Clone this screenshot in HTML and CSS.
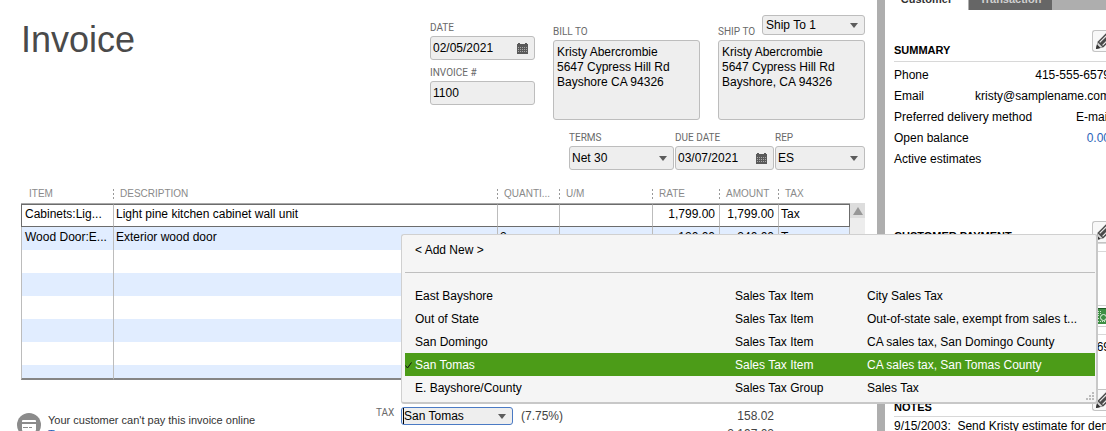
FILE: index.html
```html
<!DOCTYPE html>
<html lang="en">
<head>
<meta charset="utf-8">
<title>Invoice</title>
<link rel="stylesheet" href="styles.css">
</head>
<body>
<svg class="defs" aria-hidden="true">
  <symbol id="arrow" viewBox="0 0 8 5"><path d="M0 0h8L4 5z" fill="#5c5c5c"/></symbol>
  <symbol id="calendar" viewBox="0 0 11 11"><path d="M0 1h1V0h2v1h5V0h2v1h1v10H0z" fill="#5a5a5a"/><path d="M1 4.5h9M1 6.5h9M1 8.5h9" stroke="#a8a8a8" stroke-dasharray="1 1"/></symbol>
  <symbol id="pencil" viewBox="0 0 18 18"><path d="M1 17l2-8L12 0l6 6-9 9z" fill="#4a4a4a"/><path d="M5 10l9-9M8 13l9-9" stroke="#e8e8e8" stroke-width="1.2"/><path d="M3 10l5 5-4 1-2-2z" fill="#d8d8d8"/><path d="M1 17l1-5 4 4z" fill="#333"/></symbol>
</svg>
<div class="app">
  <main class="main">
    <header class="header">
      <h1 class="title">Invoice</h1>
      <div class="dates">
        <div class="field">
          <label class="label" for="date">DATE</label>
          <span class="box"><input class="input" id="date" value="02/05/2021"><button class="icon-button" aria-label="Pick date"><svg class="calendar"><use href="#calendar"/></svg></button></span>
        </div>
        <div class="field">
          <label class="label" for="number">INVOICE #</label>
          <span class="box"><input class="input" id="number" value="1100"></span>
        </div>
      </div>
      <div class="address">
        <div class="address-head"><label class="label" for="bill">BILL TO</label></div>
        <textarea class="textarea" id="bill">Kristy Abercrombie
5647 Cypress Hill Rd
Bayshore CA 94326</textarea>
      </div>
      <div class="address">
        <div class="address-head"><label class="label" for="ship">SHIP TO</label>
          <span class="box box-ship"><select class="select" aria-label="Ship to address"><option>Ship To 1</option></select><svg class="arrow"><use href="#arrow"/></svg></span>
        </div>
        <textarea class="textarea" id="ship">Kristy Abercrombie
5647 Cypress Hill Rd
Bayshore, CA 94326</textarea>
      </div>
    </header>

    <div class="terms">
      <div class="field field-terms">
        <label class="label" for="terms">TERMS</label>
        <span class="box"><select class="select" id="terms"><option>Net 30</option></select><svg class="arrow"><use href="#arrow"/></svg></span>
      </div>
      <div class="field field-due">
        <label class="label" for="due">DUE DATE</label>
        <span class="box"><input class="input" id="due" value="03/07/2021"><button class="icon-button" aria-label="Pick due date"><svg class="calendar"><use href="#calendar"/></svg></button></span>
      </div>
      <div class="field field-rep">
        <label class="label" for="rep">REP</label>
        <span class="box"><select class="select" id="rep"><option>ES</option></select><svg class="arrow"><use href="#arrow"/></svg></span>
      </div>
    </div>

    <div class="lines">
      <table class="table">
        <colgroup><col class="c-item"><col><col class="c-qty"><col class="c-um"><col class="c-rate"><col class="c-amount"><col class="c-tax"></colgroup>
        <thead>
          <tr><th><div class="head">ITEM</div></th><th><div class="head">DESCRIPTION</div></th><th><div class="head">QUANTI...</div></th><th><div class="head">U/M</div></th><th><div class="head">RATE</div></th><th><div class="head">AMOUNT</div></th><th><div class="head">TAX</div></th></tr>
        </thead>
        <tbody>
          <tr class="current"><td>Cabinets:Lig...</td><td>Light pine kitchen cabinet wall unit</td><td></td><td></td><td class="num">1,799.00</td><td class="num">1,799.00</td><td>Tax</td></tr>
          <tr><td>Wood Door:E...</td><td>Exterior wood door</td><td>2</td><td></td><td class="num">120.00</td><td class="num">240.00</td><td>Tax</td></tr>
          <tr><td></td><td></td><td></td><td></td><td></td><td></td><td></td></tr>
          <tr><td></td><td></td><td></td><td></td><td></td><td></td><td></td></tr>
          <tr><td></td><td></td><td></td><td></td><td></td><td></td><td></td></tr>
          <tr><td></td><td></td><td></td><td></td><td></td><td></td><td></td></tr>
          <tr><td></td><td></td><td></td><td></td><td></td><td></td><td></td></tr>
          <tr class="partial"><td></td><td></td><td></td><td></td><td></td><td></td><td></td></tr>
        </tbody>
      </table>
      <div class="scrollbar"><button class="scroll-up" aria-label="Scroll up"><svg class="scroll-arrow" viewBox="0 0 10 8"><path d="M5 0l5 8H0z" fill="#979797"/></svg></button></div>
    </div>

    <footer class="footer">
      <div class="notice">
        <svg class="card" viewBox="0 0 24 24"><circle cx="12" cy="12" r="12" fill="#8b8b8b"/><rect x="5" y="7" width="14" height="11" rx="1" fill="#fff"/><path d="M5 10h14" stroke="#8b8b8b" stroke-width="2"/><path d="M6 14.500h5M12 14.500h3" stroke="#8b8b8b"/></svg>
        <div class="notice-text">Your customer can't pay this invoice online<a class="link" href="#">Turn on</a></div>
      </div>
      <div class="totals">
        <label class="label" for="tax">TAX</label>
        <div class="combo">
          <span class="box box-tax"><input class="input input-tax" id="tax" value="San Tomas"><button class="icon-button" aria-label="Open tax list"><svg class="arrow"><use href="#arrow"/></svg></button></span>
          <div class="popup" role="listbox" aria-label="Tax">
            <div class="option option-new" role="option"><span></span><span>&lt; Add New &gt;</span></div>
            <div class="option" role="option"><span></span><span>East Bayshore</span><span>Sales Tax Item</span><span>City Sales Tax</span></div>
            <div class="option" role="option"><span></span><span>Out of State</span><span>Sales Tax Item</span><span>Out-of-state sale, exempt from sales t...</span></div>
            <div class="option" role="option"><span></span><span>San Domingo</span><span>Sales Tax Item</span><span>CA sales tax, San Domingo County</span></div>
            <div class="option selected" role="option" aria-selected="true"><svg class="check" viewBox="0 0 7 7"><path d="M.5 3.500L2.500 6 6.500.5" fill="none" stroke="#111"/></svg><span>San Tomas</span><span>Sales Tax Item</span><span>CA sales tax, San Tomas County</span></div>
            <div class="option" role="option"><span></span><span>E. Bayshore/County</span><span>Sales Tax Group</span><span>Sales Tax</span></div>
            <svg class="grip" viewBox="0 0 8 8"><path d="M6 0h2v2H6zM3 3h2v2H3zM6 3h2v2H6zM0 6h2v2H0zM3 6h2v2H3zM6 6h2v2H6z" fill="#bcbcbc"/></svg>
          </div>
        </div>
        <span class="percent">(7.75%)</span>
        <span class="amount">158.02</span>
        <span class="amount amount-total">2,197.02</span>
      </div>
    </footer>
  </main>

  <aside class="side">
    <nav class="tabs"><button class="tab tab-active">Customer</button><button class="tab">Transaction</button></nav>
    <div class="panel">
      <section class="section">
        <div class="section-head"><h2 class="heading">SUMMARY</h2><button class="edit" aria-label="Edit summary"><svg class="pencil"><use href="#pencil"/></svg></button></div>
        <dl class="facts">
          <div class="fact"><dt>Phone</dt><dd>415-555-6579</dd></div>
          <div class="fact"><dt>Email</dt><dd>kristy@samplename.com</dd></div>
          <div class="fact"><dt>Preferred delivery method</dt><dd>E-mail</dd></div>
          <div class="fact"><dt>Open balance</dt><dd><a class="link" href="#">0.00</a></dd></div>
          <div class="fact"><dt>Active estimates</dt><dd></dd></div>
        </dl>
      </section>
      <section class="section payment">
        <div class="section-head"><h2 class="heading">CUSTOMER PAYMENT</h2><button class="edit" aria-label="Edit payment"><svg class="pencil"><use href="#pencil"/></svg></button></div>
        <div class="blank"></div>
        <div class="transaction"><svg class="receipt" viewBox="0 0 16 16"><path d="M0 0h16v16H0z" fill="#3f8f45"/><path d="M0 .5h16" stroke="#1f5a25"/><path d="M2 3.500h5M2 5.500h5M2 7.500h4M2 10.500h3M2 13.500h10" stroke="#cfe8cf" stroke-dasharray="1 1"/><circle cx="9.500" cy="9.500" r="3" fill="none" stroke="#e8f5e8"/></svg></div>
        <div class="value">69</div>
      </section>
      <section class="section notes">
        <div class="section-head"><h2 class="heading">NOTES</h2><button class="edit" aria-label="Edit notes"><svg class="pencil"><use href="#pencil"/></svg></button></div>
        <p class="note">9/15/2003: &nbsp;Send Kristy estimate for den</p>
      </section>
    </div>
  </aside>
</div>
</body>
</html>
```
FILE: styles.css
```css
* { box-sizing: border-box; }

html, body { height: 100%; }

body {
  margin: 0;
  overflow: hidden;
  background: #fff;
  color: #000;
  font: 12px/15px "Liberation Sans", Arial, sans-serif;
}

h1, h2, p, dl, dd { margin: 0; }

button, input, select, textarea {
  margin: 0;
  padding: 0;
  border: 0;
  background: none;
  color: inherit;
  font: inherit;
  appearance: none;
  outline: 0;
  border-radius: 0;
}

svg { display: block; flex: none; }
.defs { position: absolute; width: 0; height: 0; }

.app { display: flex; height: 100%; }
.main { flex: 1; min-width: 0; padding-top: 15px; }

/* Form header */
.header { display: flex; gap: 18px; padding: 0 12px 0 21px; }
.title { flex: 1; margin-top: 5px; color: #4a4a4a; font-size: 36px; font-weight: 400; line-height: 40px; }
.dates { display: flex; flex-direction: column; gap: 7px; width: 105px; margin-top: 7px; }
.field { display: flex; flex-direction: column; gap: 2px; }
.label { color: #6a6a6a; font: 10px/12px Roboto, sans-serif; }

.box {
  display: flex;
  align-items: center;
  width: 100%;
  height: 24px;
  padding: 0 6px 0 2px;
  border: 1px solid #bdbdbd;
  border-radius: 3px;
  background: #eee;
}
.input, .select { flex: 1; min-width: 0; width: 0; height: 16px; }
.icon-button { display: flex; }
.calendar { width: 11px; height: 11px; }
.arrow { width: 8px; height: 5px; }

.address { width: 147px; }
.address-head { display: flex; align-items: flex-end; justify-content: space-between; height: 23px; margin-bottom: 2px; }
.box-ship { align-self: flex-start; width: 103px; height: 20px; padding-left: 3px; }
.textarea {
  display: block;
  width: 100%;
  height: 80px;
  padding: 4px 3px;
  border: 1px solid #bdbdbd;
  border-radius: 3px;
  background: #eee;
  resize: none;
  overflow: hidden;
}

.terms { display: flex; justify-content: flex-end; gap: 1px; padding: 12px 12px 0 0; }
.field-terms { width: 105px; }
.field-due { width: 99px; }
.field-rep { width: 90px; }

/* Line items */
.lines { display: flex; margin: 11px 12px 0 21px; }
.table { flex: 1; width: 100%; table-layout: fixed; border-spacing: 0; }
.c-item { width: 92px; }
.c-qty { width: 62px; }
.c-um { width: 93px; }
.c-rate { width: 67px; }
.c-amount { width: 59px; }
.c-tax { width: 72px; }

th { height: 23px; padding: 3px 0 0; border-bottom: 1px solid #a9a9a9; text-align: left; font-weight: 400; }
.head {
  height: 10px;
  padding-left: 7px;
  background: repeating-linear-gradient(#999 0 2px, transparent 2px 4px) left top / 1px 10px no-repeat;
  color: #8a8a8a;
  font-size: 10px;
  line-height: 10px;
  white-space: nowrap;
}
th:first-child .head { padding-left: 8px; background: none; }

td { height: 23px; padding: 0 4px 2px 2px; border-left: 1px solid #bcbcbc; white-space: nowrap; overflow: hidden; }
td:first-child { padding-left: 3px; }
td:last-child { border-right: 1px solid #bcbcbc; }
tbody tr:nth-child(even) { background: #e1edff; }
.num { text-align: right; }
.current td { border-top: 1px solid #6c6c6c; border-bottom: 1px solid #6c6c6c; }
.current td:first-child { border-left-color: #6c6c6c; }
.current td:last-child { border-right-color: #6c6c6c; }
.partial td { height: 15px; padding: 0; border-bottom: 2px solid #858585; }

.scrollbar { width: 15px; margin-top: 22px; background: #ededed; }
.scroll-up { display: flex; align-items: center; justify-content: center; width: 15px; height: 15px; background: #ddd; }
.scroll-arrow { width: 10px; height: 8px; }

/* Footer */
.footer { display: flex; align-items: flex-start; padding: 27px 103px 0 17px; }
.notice { display: flex; flex: 1; gap: 7px; margin-top: 6px; }
.card { width: 24px; height: 24px; }
.notice-text { color: #333; font-size: 11px; line-height: 14px; white-space: nowrap; }
.link { color: #2a62b8; text-decoration: none; }
.notice-text .link { display: block; }

.totals { display: grid; grid-template-columns: 25px 112px 1fr auto; width: 398px; color: #444; }
.combo { position: relative; color: #000; }
.box-tax { height: 18px; padding-left: 1px; border-color: #4a7ac4; }
.input-tax { border-left: 1px solid #000; }
.percent { padding-left: 8px; }
.amount { text-align: right; }
.amount-total { grid-column: 4; }
.percent, .amount { line-height: 18px; }

/* Tax list */
.popup {
  position: absolute;
  z-index: 2;
  bottom: calc(100% + 3px);
  left: 0;
  width: 697px;
  padding: 3px 1px 3px 3px;
  border: 1px solid #d0d0d0;
  border-right: 2px solid #c8c8c8;
  border-bottom: 2px solid #c8c8c8;
  border-radius: 3px;
  background: #f5f5f5;
}
.option {
  display: grid;
  grid-template-columns: 10px 320px 132px 1fr;
  align-items: center;
  height: 23px;
  padding-top: 2px;
  white-space: nowrap;
}
.option-new { height: 35px; margin-bottom: 11px; padding-bottom: 11px; border-bottom: 1px solid #bfbfbf; }
.selected { background: #4c9c18; color: #fff; }
.check { width: 7px; height: 7px; }
.grip { position: absolute; right: 2px; bottom: 2px; width: 8px; height: 8px; }

/* Customer panel */
.side { width: 229px; border-left: 8px solid #aeaeae; overflow: hidden; }
.tabs { display: flex; gap: 1px; height: 10px; background: #aeaeae; align-items: flex-end; }
.tab { width: 83px; height: 20px; padding-bottom: 3px; background: #666; color: #d0d0d0; font-size: 11px; font-weight: 700; line-height: 14px; }
.tab-active { background: #fff; color: #333; }

.panel { width: 225px; padding: 20px 0 0 9px; }
.section-head { display: flex; align-items: center; justify-content: space-between; height: 32px; padding-bottom: 9px; border-bottom: 1px solid #d8d8d8; }
.heading { padding-top: 18px; font-size: 11px; font-weight: 700; line-height: 14px; }
.edit { display: flex; width: 18px; height: 22px; padding: 2px 0 0 2px; border: 1px solid #c4c4c4; border-right: 0; border-radius: 3px 0 0 3px; background: #f8f8f8; overflow: hidden; }
.pencil { width: 17px; height: 17px; }
.facts { padding-top: 3px; }
.fact { display: flex; justify-content: space-between; height: 21px; line-height: 21px; white-space: nowrap; }

.payment { margin-top: 51px; }
.blank { height: 54px; margin-top: 7px; border-top: 1px solid #d8d8d8; }
.payment .section-head { height: 23px; padding-bottom: 0; }
.payment .heading { padding-top: 7px; }
.notes .heading { padding-top: 14px; }
.transaction { display: flex; justify-content: flex-end; height: 22px; padding: 2px 0; border-top: 1px solid #d0d0d0; border-bottom: 1px solid #d0d0d0; }
.receipt { width: 16px; height: 16px; }
.value { height: 55px; margin-top: 7px; padding-top: 5px; border-top: 1px solid #d8d8d8; text-align: right; }
.notes .section-head { height: 28px; padding-bottom: 6px; }
.note { padding-top: 2px; white-space: nowrap; }
```
